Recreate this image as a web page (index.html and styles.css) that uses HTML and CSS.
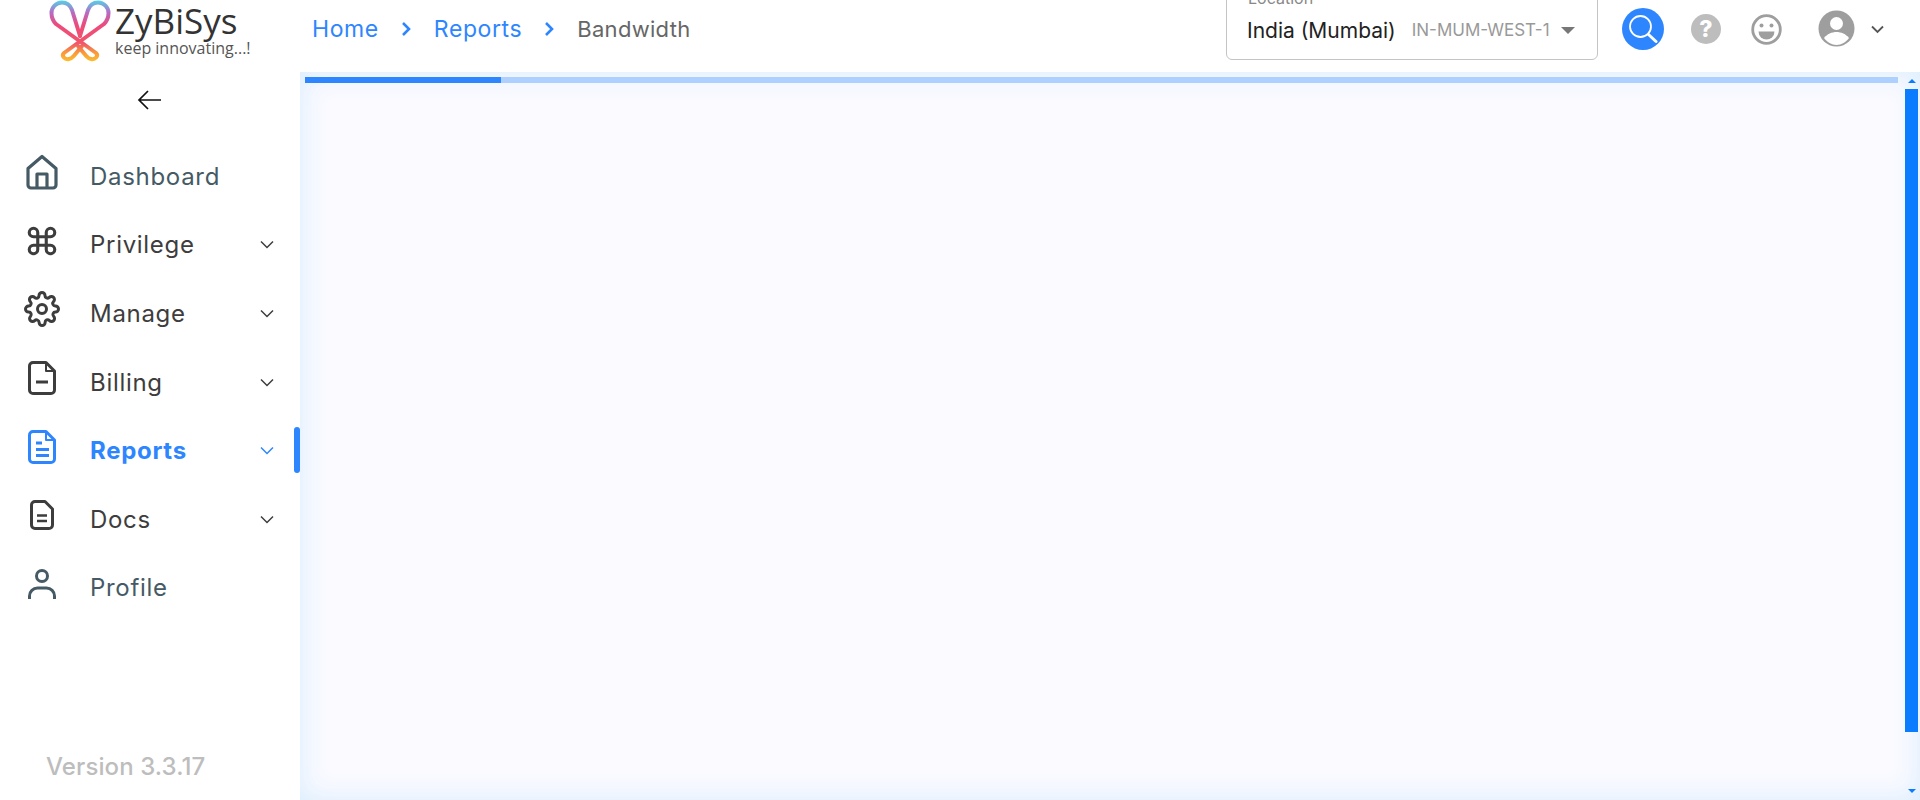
FILE: index.html
```html
<!DOCTYPE html>
<html lang="en">
<head>
  <meta charset="UTF-8" />
  <title>ZyBiSys - Bandwidth</title>
  <link rel="stylesheet" href="styles.css">
</head>
<body>
  <aside class="sidebar">
    <div class="logo">
      <svg class="logo-mark" width="64" height="64" viewBox="48 0 64 64" fill="none">
        <defs>
          <linearGradient id="logoGrad" gradientUnits="userSpaceOnUse" x1="0" y1="0" x2="0" y2="62">
            <stop offset="0" stop-color="#4dd6ea"/>
            <stop offset="0.2" stop-color="#b56cc4"/>
            <stop offset="0.4" stop-color="#ee4a7c"/>
            <stop offset="0.7" stop-color="#f0566a"/>
            <stop offset="0.85" stop-color="#f99a3a"/>
            <stop offset="1" stop-color="#fbc02d"/>
          </linearGradient>
        </defs>
        <path d="M80 36 L72 10 C70 4.500 66 2.500 62 2.500 C56 2.500 51.500 7.500 51.500 13 C51.500 18 53 21 56 24 L96 53 C99 56 95 60 91 59 C88 58.500 86 56 78 46" stroke="url(#logoGrad)" stroke-width="4" stroke-linecap="round" stroke-linejoin="round"/>
        <path d="M80 36 L88 10 C90 4.500 94 2.500 98 2.500 C104 2.500 108.500 7.500 108.500 13 C108.500 18 107 21 104 24 L64 53 C61 56 65 60 69 59 C72 58.500 74 56 82 46" stroke="url(#logoGrad)" stroke-width="4" stroke-linecap="round" stroke-linejoin="round"/>
      </svg>
      <div class="logo-text">
        <div class="logo-name">ZyBiSys</div>
        <div class="logo-tag">keep innovating...!</div>
      </div>
    </div>

    <div class="collapse">
      <svg width="26" height="22" viewBox="0 0 26 22" fill="none" stroke="#111" stroke-width="1.700">
        <path d="M24 11H2M11 2l-9 9 9 9"/>
      </svg>
    </div>

    <nav class="nav">
      <a class="nav-item slate">
        <span class="nav-icon">
          <svg width="34" height="36" viewBox="0 0 34 36" fill="none" stroke="currentColor" stroke-width="3.200" stroke-linejoin="round">
            <path d="M3 14.500 17 2.500l14 12V31a3 3 0 0 1-3 3H6a3 3 0 0 1-3-3z"/>
            <path d="M12 34V20h10v14"/>
          </svg>
        </span>
        <span class="nav-label">Dashboard</span>
      </a>
      <a class="nav-item">
        <span class="nav-icon">
          <svg width="34" height="34" viewBox="0 0 24 24" fill="none" stroke="currentColor" stroke-width="2.200">
            <path d="M18 3a3 3 0 0 0-3 3v12a3 3 0 0 0 3 3 3 3 0 0 0 3-3 3 3 0 0 0-3-3H6a3 3 0 0 0-3 3 3 3 0 0 0 3 3 3 3 0 0 0 3-3V6a3 3 0 0 0-3-3 3 3 0 0 0-3 3 3 3 0 0 0 3 3h12a3 3 0 0 0 3-3 3 3 0 0 0-3-3z"/>
          </svg>
        </span>
        <span class="nav-label">Privilege</span>
        <svg class="nav-caret" width="14" height="9" viewBox="0 0 14 9" fill="none" stroke="currentColor" stroke-width="1.500"><path d="M1 1.500l6 6 6-6"/></svg>
      </a>
      <a class="nav-item">
        <span class="nav-icon">
          <svg width="36" height="36" viewBox="0 0 24 24" fill="none" stroke="currentColor" stroke-width="2">
            <circle cx="12" cy="12" r="3"/>
            <path d="M19.400 15a1.650 1.650 0 0 0 .33 1.820l.06.06a2 2 0 0 1 0 2.830 2 2 0 0 1-2.830 0l-.06-.06a1.650 1.650 0 0 0-1.820-.33 1.650 1.650 0 0 0-1 1.510V21a2 2 0 0 1-2 2 2 2 0 0 1-2-2v-.09A1.650 1.650 0 0 0 9 19.400a1.650 1.650 0 0 0-1.820.33l-.06.06a2 2 0 0 1-2.830 0 2 2 0 0 1 0-2.830l.06-.06a1.650 1.650 0 0 0 .33-1.820 1.650 1.650 0 0 0-1.510-1H3a2 2 0 0 1-2-2 2 2 0 0 1 2-2h.09A1.650 1.650 0 0 0 4.600 9a1.650 1.650 0 0 0-.33-1.820l-.06-.06a2 2 0 0 1 0-2.830 2 2 0 0 1 2.830 0l.06.06a1.650 1.650 0 0 0 1.820.33H9a1.650 1.650 0 0 0 1-1.510V3a2 2 0 0 1 2-2 2 2 0 0 1 2 2v.09a1.650 1.650 0 0 0 1 1.510 1.650 1.650 0 0 0 1.820-.33l.06-.06a2 2 0 0 1 2.830 0 2 2 0 0 1 0 2.830l-.06.06a1.650 1.650 0 0 0-.33 1.820V9a1.650 1.650 0 0 0 1.510 1H21a2 2 0 0 1 2 2 2 2 0 0 1-2 2h-.09a1.650 1.650 0 0 0-1.510 1z"/>
          </svg>
        </span>
        <span class="nav-label">Manage</span>
        <svg class="nav-caret" width="14" height="9" viewBox="0 0 14 9" fill="none" stroke="currentColor" stroke-width="1.500"><path d="M1 1.500l6 6 6-6"/></svg>
      </a>
      <a class="nav-item">
        <span class="nav-icon">
          <svg width="28" height="34" viewBox="0 0 28 34" fill="none" stroke="currentColor" stroke-width="3" stroke-linejoin="round">
            <path d="M18 1.500H5a3.500 3.500 0 0 0-3.500 3.500v24A3.500 3.500 0 0 0 5 32.500h18a3.500 3.500 0 0 0 3.500-3.500V10z"/>
            <path d="M18 1.500V10h8.500" stroke-width="2"/>
            <path d="M8 21h12"/>
          </svg>
        </span>
        <span class="nav-label">Billing</span>
        <svg class="nav-caret" width="14" height="9" viewBox="0 0 14 9" fill="none" stroke="currentColor" stroke-width="1.500"><path d="M1 1.500l6 6 6-6"/></svg>
      </a>
      <a class="nav-item active">
        <span class="nav-icon">
          <svg width="28" height="34" viewBox="0 0 28 34" fill="none" stroke="currentColor" stroke-width="3" stroke-linejoin="round">
            <path d="M18 1.500H5a3.500 3.500 0 0 0-3.500 3.500v24A3.500 3.500 0 0 0 5 32.500h18a3.500 3.500 0 0 0 3.500-3.500V10z"/>
            <path d="M18 1.500V10h8.500" stroke-width="2"/>
            <path d="M8 13h6M8 19.500h13M8 25.500h13"/>
          </svg>
        </span>
        <span class="nav-label">Reports</span>
        <svg class="nav-caret" width="14" height="9" viewBox="0 0 14 9" fill="none" stroke="currentColor" stroke-width="1.500"><path d="M1 1.500l6 6 6-6"/></svg>
      </a>
      <a class="nav-item">
        <span class="nav-icon">
          <svg width="24" height="30" viewBox="0 0 24 30" fill="none" stroke="currentColor" stroke-width="3" stroke-linejoin="round">
            <path d="M15 1.500H5A3.500 3.500 0 0 0 1.500 5v20A3.500 3.500 0 0 0 5 28.500h14a3.500 3.500 0 0 0 3.500-3.500V9z"/>
            <path d="M7 15.500h10M7 21h10" stroke-width="2.600"/>
          </svg>
        </span>
        <span class="nav-label">Docs</span>
        <svg class="nav-caret" width="14" height="9" viewBox="0 0 14 9" fill="none" stroke="currentColor" stroke-width="1.500"><path d="M1 1.500l6 6 6-6"/></svg>
      </a>
      <a class="nav-item slate">
        <span class="nav-icon">
          <svg width="28" height="30" viewBox="0 0 28 30" fill="none" stroke="currentColor" stroke-width="3">
            <circle cx="14" cy="7" r="5.500"/>
            <path d="M1.500 30v-3a8 8 0 0 1 8-8h9a8 8 0 0 1 8 8v3"/>
          </svg>
        </span>
        <span class="nav-label">Profile</span>
      </a>
    </nav>

    <div class="version">Version 3.3.17</div>
  </aside>

  <div class="page">
    <header class="topbar">
      <div class="crumbs">
        <a class="crumb-link">Home</a>
        <svg class="crumb-sep" width="11" height="16" viewBox="0 0 11 16" fill="none" stroke="currentColor" stroke-width="2.600"><path d="M2 2l6 6-6 6"/></svg>
        <a class="crumb-link">Reports</a>
        <svg class="crumb-sep" width="11" height="16" viewBox="0 0 11 16" fill="none" stroke="currentColor" stroke-width="2.600"><path d="M2 2l6 6-6 6"/></svg>
        <span class="crumb-now">Bandwidth</span>
      </div>

      <div class="location">
        <span class="location-label">Location</span>
        <span class="location-name">India (Mumbai)</span>
        <span class="location-code">IN-MUM-WEST-1</span>
        <span class="location-caret"></span>
      </div>

      <div class="search-btn">
        <svg width="30" height="30" viewBox="0 0 30 30" fill="none" stroke="#fff">
          <circle cx="12.500" cy="12.500" r="10.500" stroke-width="1.800"/>
          <path d="M20.500 20.500 28 27.500" stroke-width="3" stroke-linecap="round"/>
        </svg>
      </div>
      <div class="help-btn">?</div>
      <svg class="smile" width="31" height="31" viewBox="0 0 31 31">
        <circle cx="15.500" cy="15.500" r="13.800" fill="none" stroke="#9e9e9e" stroke-width="2.800"/>
        <circle cx="10.500" cy="11.500" r="2" fill="#9e9e9e"/>
        <circle cx="20.500" cy="11.500" r="2" fill="#9e9e9e"/>
        <path d="M7.500 17.500h16a8 8 0 0 1-16 0z" fill="#9e9e9e"/>
      </svg>
      <svg class="avatar" width="37" height="37" viewBox="0 0 37 37">
        <circle cx="18.500" cy="18.500" r="18" fill="#9e9e9e"/>
        <circle cx="18.500" cy="13.500" r="6.500" fill="#fff"/>
        <path d="M6 28c3-4 8-6 12.500-6S28 24 31 28c-3 4-7.500 7-12.500 7S9 32 6 28z" fill="#fff"/>
      </svg>
      <svg class="user-caret" width="13" height="9" viewBox="0 0 13 9" fill="none" stroke="#555" stroke-width="1.800"><path d="M1 1.500l5.500 5.500L12 1.500"/></svg>
    </header>

    <main class="content">
      <div class="content-inner">
        <div class="progress"><div class="progress-fill"></div></div>
      </div>
      <div class="scrollbar">
        <span class="arrow-up"></span>
        <div class="thumb"></div>
        <span class="arrow-down"></span>
      </div>
    </main>
  </div>
</body>
</html>
```

FILE: styles.css
```css
* {
  box-sizing: border-box;
}
html, body {
  height: 100%;
  margin: 0;
  overflow: hidden;
}
body {
  display: flex;
  background: #fff;
  font-family: Inter, "Noto Sans", sans-serif;
  color: #3d3d3d;
}

/* sidebar */
.sidebar {
  width: 300px;
  height: 800px;
  display: flex;
  flex-direction: column;
  flex-shrink: 0;
}
.logo {
  height: 72px;
  display: flex;
  padding-left: 48px;
}
.logo-mark {
  flex-shrink: 0;
}
.logo-text {
  margin-left: 3px;
}
.logo-name {
  font-family: "Open Sans", sans-serif;
  font-size: 35px;
  line-height: 36px;
  margin-top: 3px;
  color: #333;
}
.logo-tag {
  font-family: "Open Sans", sans-serif;
  font-size: 16px;
  line-height: 18px;
  color: #555;
}
.collapse {
  height: 70px;
  padding-top: 17px;
  display: flex;
  justify-content: center;
}
.nav-item {
  position: relative;
  height: 68.600px;
  display: flex;
  align-items: center;
  padding-left: 24px;
  color: #3d3d3d;
}
.nav-item.slate {
  color: #455a64;
}
.nav-item.active {
  color: #2e86ff;
  font-weight: 700;
}
.nav-item.active::after {
  content: "";
  position: absolute;
  right: 0;
  top: 11px;
  width: 6px;
  height: 46px;
  background: #2e86ff;
  border-radius: 3px;
}
.nav-icon {
  width: 36px;
  margin-bottom: 8px;
  margin-right: 30px;
  display: flex;
  justify-content: center;
}
.nav-label {
  font-size: 24px;
  letter-spacing: 0.7px;
  flex: 1;
}
.nav-caret {
  margin-right: 26px;
}
.version {
  margin-top: auto;
  padding: 0 0 19px 46px;
  font-size: 24px;
  letter-spacing: 0.1px;
  font-weight: 500;
  color: #bdbdbd;
}

/* top bar */
.page {
  flex: 1;
  min-width: 0;
  display: flex;
  flex-direction: column;
}
.topbar {
  height: 72px;
  display: flex;
  align-items: flex-start;
  padding: 0 36px 0 12px;
  overflow: hidden;
}
.crumbs {
  display: flex;
  align-items: center;
  height: 58px;
  flex: 1;
}
.crumb-link {
  color: #2e86ff;
  font-size: 23px;
  letter-spacing: 0.6px;
}
.crumb-sep {
  color: #2e86ff;
  margin: 0 22px;
}
.crumb-now {
  color: #666;
  font-size: 22px;
  letter-spacing: 0.3px;
}
.location {
  position: relative;
  width: 372px;
  height: 70px;
  margin-top: -10px;
  padding: 10px 22px 0 20px;
  display: flex;
  align-items: center;
  border: 1px solid #c4c4c4;
  border-radius: 6px;
}
.location-label {
  position: absolute;
  left: 20px;
  top: -3px;
  padding: 0 1px;
  font-size: 16px;
  color: #888;
  background: #fff;
}
.location-name {
  font-size: 21px;
  color: #222;
}
.location-code {
  margin-left: 16px;
  font-size: 17px;
  color: #999;
  flex: 1;
}
.location-caret {
  width: 0;
  height: 0;
  border-left: 7px solid transparent;
  border-right: 7px solid transparent;
  border-top: 7px solid #777;
}
.search-btn {
  width: 42px;
  height: 42px;
  margin: 8px 0 0 24px;
  border-radius: 50%;
  background: #2e86ff;
  display: flex;
  align-items: center;
  justify-content: center;
}
.help-btn {
  width: 30px;
  height: 30px;
  margin: 14px 0 0 27px;
  border-radius: 50%;
  background: #bdbdbd;
  color: #fff;
  font-size: 23px;
  font-weight: 800;
  line-height: 30px;
  text-align: center;
}
.smile {
  margin: 14px 0 0 30px;
}
.avatar {
  margin: 10px 0 0 36px;
}
.user-caret {
  margin: 25px 0 0 16px;
}

/* main */
.content {
  flex: 1;
  display: flex;
  background: #fafaff;
  box-shadow: inset 0 0 28px #d8ecfd;
}
.content-inner {
  flex: 1;
  padding: 5px 6px 0 5px;
}
.progress {
  height: 6px;
  background: #aed0ff;
}
.progress-fill {
  width: 196px;
  height: 6px;
  background: #2e86ff;
}
.scrollbar {
  width: 15px;
  margin-right: 1px;
  padding-top: 7px;
  display: flex;
  flex-direction: column;
  align-items: center;
}
.thumb {
  width: 13px;
  height: 643px;
  margin-top: 6px;
  background: #0a7cff;
}
.arrow-up {
  width: 0;
  height: 0;
  border-left: 4px solid transparent;
  border-right: 4px solid transparent;
  border-bottom: 4px solid #0a7cff;
}
.arrow-down {
  width: 0;
  height: 0;
  margin-top: 57px;
  border-left: 4px solid transparent;
  border-right: 4px solid transparent;
  border-top: 4px solid #0a7cff;
}
```
